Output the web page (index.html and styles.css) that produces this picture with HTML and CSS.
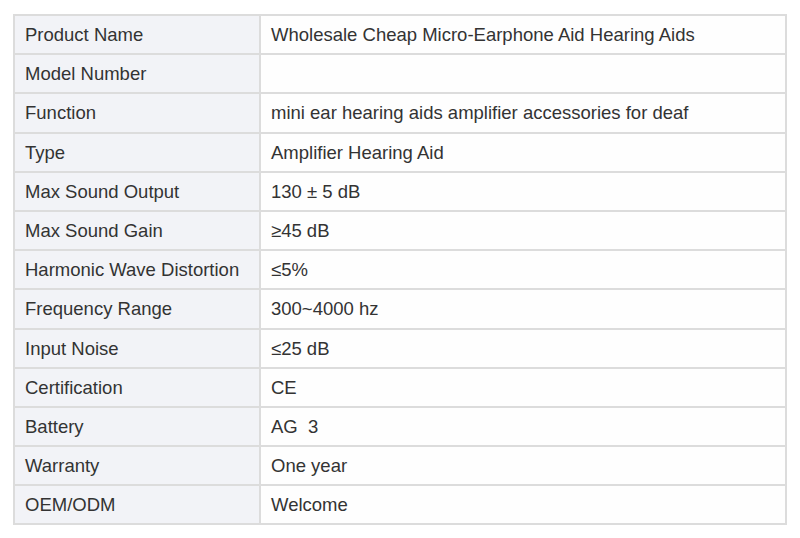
FILE: index.html
```html
<!DOCTYPE html>
<html>
<head>
<meta charset="utf-8">
<link rel="stylesheet" href="styles.css">
</head>
<body>
<div class="wrap">
<table class="spec">
<tr><td class="k">Product Name</td><td class="v">Wholesale Cheap Micro-Earphone Aid Hearing Aids</td></tr>
<tr><td class="k">Model Number</td><td class="v"></td></tr>
<tr><td class="k">Function</td><td class="v">mini ear hearing aids amplifier accessories for deaf</td></tr>
<tr><td class="k">Type</td><td class="v">Amplifier Hearing Aid</td></tr>
<tr><td class="k">Max Sound Output</td><td class="v">130 ± 5 dB</td></tr>
<tr><td class="k">Max Sound Gain</td><td class="v">≥45 dB</td></tr>
<tr><td class="k">Harmonic Wave Distortion</td><td class="v">≤5%</td></tr>
<tr><td class="k">Frequency Range</td><td class="v">300~4000 hz</td></tr>
<tr><td class="k">Input Noise</td><td class="v">≤25 dB</td></tr>
<tr><td class="k">Certification</td><td class="v">CE</td></tr>
<tr><td class="k">Battery</td><td class="v">AG&nbsp; 3</td></tr>
<tr><td class="k">Warranty</td><td class="v">One year</td></tr>
<tr><td class="k">OEM/ODM</td><td class="v">Welcome</td></tr>
</table>
</div>
</body>
</html>
```
FILE: styles.css
```css
html, body {
  margin: 0;
  padding: 0;
  background: #ffffff;
}
.wrap {
  padding: 14px 0 0 13px;
}
.spec {
  border-collapse: collapse;
  width: 774px;
  font-family: "Liberation Sans", Arial, sans-serif;
  font-size: 18.5px;
  color: #333333;
  border: 2px solid #dcdcdc;
}
.spec td {
  border: 2px solid #dcdcdc;
  height: 36.2px;
  padding: 1px 0 0 10px;
  vertical-align: middle;
}
.spec td.k {
  width: 234px;
  background: #f2f3f7;
}
.spec td.v {
  background: #fefefe;
}
```
